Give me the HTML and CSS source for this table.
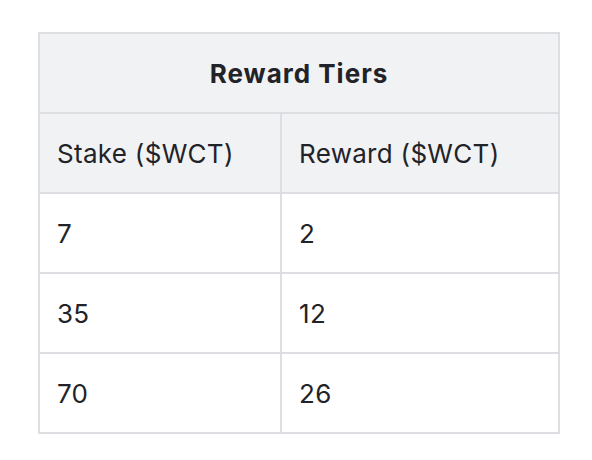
FILE: index.html
```html
<!DOCTYPE html>
<html>
<head>
<meta charset="utf-8">
<link rel="stylesheet" href="styles.css">
</head>
<body>
<table class="tiers">
  <colgroup><col class="c1"><col class="c2"></colgroup>
  <thead>
    <tr><th class="title" colspan="2">Reward Tiers</th></tr>
    <tr class="head-row"><td>Stake ($WCT)</td><td>Reward ($WCT)</td></tr>
  </thead>
  <tbody>
    <tr><td>7</td><td>2</td></tr>
    <tr><td>35</td><td>12</td></tr>
    <tr><td>70</td><td>26</td></tr>
  </tbody>
</table>
</body>
</html>
```
FILE: styles.css
```css
html, body {
  margin: 0;
  padding: 0;
  background: #ffffff;
}
body {
  padding: 32px 0 0 38px;
  font-family: Inter, "Noto Sans", sans-serif;
  color: #222329;
}
.tiers {
  border-collapse: collapse;
  width: 520px;
  table-layout: fixed;
}
.c1 { width: 242px; }
.c2 { width: 278px; }
.tiers th, .tiers td {
  border: 2px solid #dedee2;
  height: 80px;
  padding: 0 0 0 17px;
  font-size: 26px;
  font-weight: 400;
  letter-spacing: 0.3px;
  text-align: left;
  vertical-align: middle;
  box-sizing: border-box;
}
.tiers th.title {
  text-align: center;
  font-weight: 700;
  padding: 0;
  background: #f1f2f4;
  letter-spacing: 1px;
}
.head-row td {
  background: #f1f2f4;
}
```
